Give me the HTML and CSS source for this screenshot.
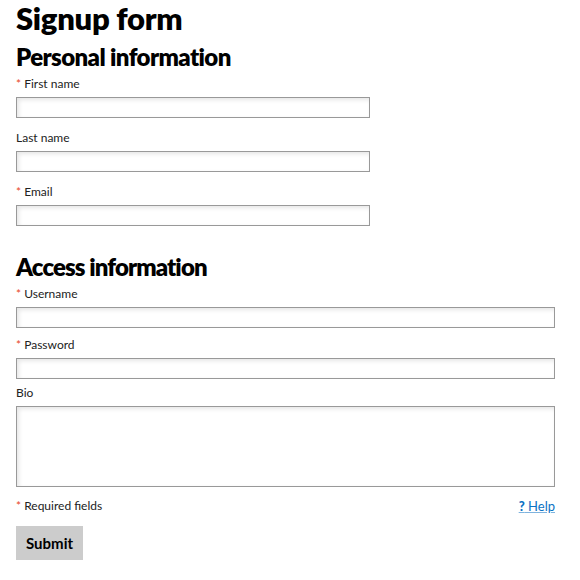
FILE: index.html
```html
<!DOCTYPE html>
<html lang="en">
<head>
    <meta charset="UTF-8">
    <meta name="viewport" content="width=device-width, initial-scale=1.0">
    <title>Signup form</title>
    <link rel="stylesheet" href="styles.css">
</head>
<body>
    <form class="signup">
        <h1>Signup form</h1>

        <!-- Personal information -->
        <section class="group">
            <h2>Personal information</h2>
            <div class="field">
                <label for="firstName"><span class="req">*</span> First name</label>
                <input type="text" id="firstName" class="short">
            </div>
            <div class="field">
                <label for="lastName">Last name</label>
                <input type="text" id="lastName" class="short">
            </div>
            <div class="field">
                <label for="email"><span class="req">*</span> Email</label>
                <input type="text" id="email" class="short">
            </div>
        </section>

        <!-- Access information -->
        <section class="group access">
            <h2>Access information</h2>
            <div class="field">
                <label for="username"><span class="req">*</span> Username</label>
                <input type="text" id="username">
            </div>
            <div class="field tight">
                <label for="password"><span class="req">*</span> Password</label>
                <input type="password" id="password">
            </div>
            <div class="field">
                <label for="bio">Bio</label>
                <textarea id="bio"></textarea>
            </div>
        </section>

        <div class="footer">
            <span class="note"><span class="req">*</span> Required fields</span>
            <a href="#" class="help"><b>?</b> Help</a>
        </div>

        <button type="submit">Submit</button>
    </form>
</body>
</html>
```

FILE: styles.css
```css
/* Signup form */
body {
    margin: 0;
    background-color: white;
    font-family: Lato, "Open Sans", sans-serif;
    color: #222;
}
.signup {
    width: 539px;
    padding: 0 16px;
}
h1 {
    margin: 0;
    font-size: 31px;
    line-height: 37px;
    font-weight: 800;
    color: black;
    letter-spacing: -0.3px;
}
h2 {
    margin: 6px 0 5px;
    font-size: 24px;
    line-height: 28px;
    font-weight: 800;
    color: black;
    letter-spacing: -0.6px;
}
.access h2 {
    margin-top: 27px;
    letter-spacing: -0.9px;
}
.field {
    margin-bottom: 12px;
}
.access .field {
    margin-bottom: 9px;
}
.access .field.tight {
    margin-bottom: 6px;
}
.field label {
    display: block;
    font-size: 12px;
    line-height: 16px;
    margin-bottom: 5px;
}
.req {
    color: #e8461e;
}
.field input,
.field textarea {
    display: block;
    box-sizing: border-box;
    width: 100%;
    height: 21px;
    margin: 0;
    border: 1px solid #999;
    border-radius: 0;
    background-color: white;
    box-shadow: inset 2px 2px 4px rgba(0, 0, 0, 0.1);
    font: inherit;
}
.field input.short {
    width: 354px;
}
.field textarea {
    height: 81px;
    resize: none;
}
.footer {
    display: flex;
    justify-content: space-between;
    align-items: center;
    margin-top: 11px;
    font-size: 12px;
    line-height: 16px;
}
.help {
    color: #0b72c4;
    font-size: 13px;
    text-decoration: underline;
    text-decoration-color: #7fb3de;
}
.help b {
    font-weight: 900;
}
button {
    margin-top: 12px;
    padding: 0 10px;
    height: 34px;
    border: none;
    background-color: #ccc;
    color: black;
    font: inherit;
    font-size: 15px;
    font-weight: bold;
    cursor: pointer;
}
```
